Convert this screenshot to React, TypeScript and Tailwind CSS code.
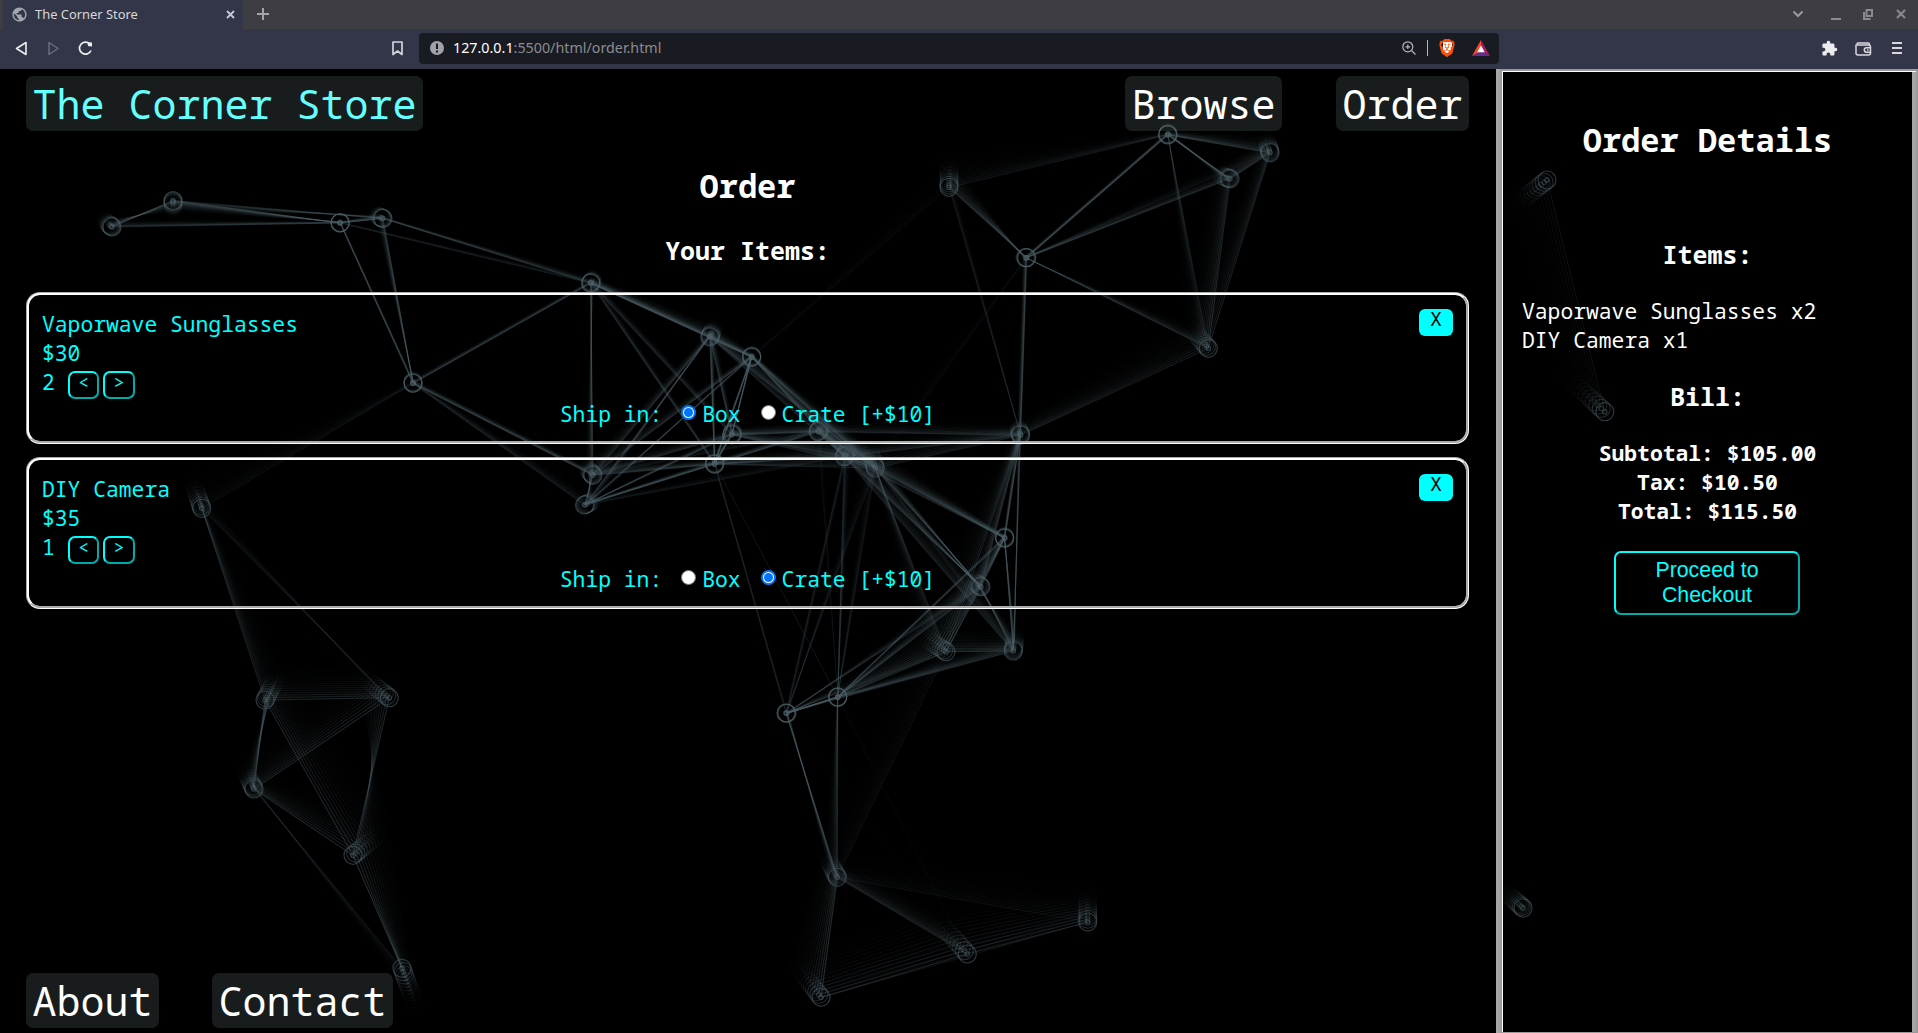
import React from "react";
import { SiBrave } from "react-icons/si";
import { MdPublic, MdExtension } from "react-icons/md";

type Node = [number, number, number, number];

/* x, y of each particle in the window, then the offset to the tail of its trail */
const nodes: Record<string, Node> = {
  A: [112, 227, -10, -9], B: [173, 200.5, 0, 14], C: [340, 223, 1, -2], D: [383, 218.5, -10, -5],
  E: [413, 383.5, 0, -6], F: [590.6, 283.3, 4, -7], G: [709.8, 337, 6, -14], H: [751.7, 357.3, 0, -5],
  I: [731.8, 435, 2, -9], J: [714.6, 464.3, 0, -6], K: [818, 431.7, 8, -12], L: [844.3, 456.7, 10, -18],
  M: [875.3, 468, -10, -30], N: [1020.6, 435.2, -4, -14], O: [1004.7, 538.3, -1, -5],
  P: [981, 586.7, -14, -11], Q: [946, 651.7, -38, -26], R: [1013.3, 651, 3, -24],
  S: [837.7, 697.3, 0, -2], T: [786, 713, 4, 1], U: [837.3, 877.3, -16, -30], V: [821, 997.3, -36, -46],
  W: [967.3, 954, -48, -56], X: [1087.7, 922, 0, -46], Y: [592.9, 475.3, -10, -12], Z: [584.5, 505, 16, -8],
  a: [201.7, 508.3, -13, -40], b: [265, 700, 20, -38], c: [389.3, 697.7, -42, -34],
  d: [254, 789, -13, -26], e: [353, 855.3, 44, -36], f: [402, 968.3, 20, 56], g: [949, 187.3, 0, -36],
  h: [1167.7, 135, 1, -5], i: [1270, 152.7, -5, -20], j: [1230, 178.7, -18, -6],
  k: [1026.7, 257.7, -5, 0], l: [1208.3, 348.3, -28, -32],
  m: [1547, 180, -48, 38], n: [1604.8, 411.7, -58, -54], o: [1523, 908, -26, -24],
};

/* pairs of particles with the strength of the thread between them, in tenths */
const links =
  "AB6 AC4 BC6 BD4 CD6 DF4 CE4 DE5 CF2 EF4 EY5 EZ3 Ea2 ab4 ac2 bc5 bd6 cd5 be5 ce5 de5 df2 ef6 " +
  "FG7 FH5 FY5 FJ3 FI3 GH6 GY4 GZ4 GJ5 GI4 GL4 GM5 HY4 HZ3 HI5 HJ5 HL6 HM5 Hg1 IK6 IL4 IM4 IZ4 IY4 IJ6 " +
  "JL5 JK4 JM4 JY5 JZ5 YK2 ZK2 KL7 KM7 KN4 YZ6 ZL2 LM7 LN4 MN4 MO6 LO4 LP5 MP5 MQ4 LR4 MR2 OP6 OR5 ON5 NP5 " +
  "NQ4 NR4 Nk5 Ng2 Nl4 kg6 kh5 kj4 kl4 gh3 hi6 hj6 hl3 ij6 il4 jl5 kM1 ki2 LS3 LT2 MS2 MT2 JT2 JS1 KS1 " +
  "PQ6 PR5 PS4 PT3 QR6 QS5 QT4 RS4 RT3 OS3 OQ4 ST6 SU4 TU5 QU2 UV6 UW5 UX2 VW5 WX5 TW.3 SW.5 VX2 mn2";

const STEPS = 14;

function Particles() {
  const at = (id: string, k: number) => {
    const [x, y, dx, dy] = nodes[id];
    return [x + (dx * k * 0.85) / STEPS, y + (dy * k * 0.85) / STEPS - 69];
  };
  const steps = Array.from({ length: STEPS }, (_, k) => STEPS - 1 - k);
  return (
    <svg className="pointer-events-none absolute inset-0" width="1918" height="964" fill="none" stroke="#52656c">
      {steps.map((k) => {
        const threadFade = Math.pow(0.82, k);
        const ringFade = Math.pow(0.72, k);
        return (
          <g key={k} strokeWidth={1.2}>
            {links.split(" ").map((l) => {
              const [x1, y1] = at(l[0], k);
              const [x2, y2] = at(l[1], k);
              return <line key={l} x1={x1} y1={y1} x2={x2} y2={y2} strokeOpacity={0.07 * Number(l.slice(2)) * threadFade} />;
            })}
            {Object.keys(nodes).map((id) => {
              const [cx, cy] = at(id, k);
              return (
                <g key={id} strokeOpacity={0.55 * ringFade}>
                  <circle cx={cx} cy={cy} r={9} />
                  <circle cx={cx} cy={cy} r={2.2} />
                </g>
              );
            })}
          </g>
        );
      })}
    </svg>
  );
}

const mono = "font-['Noto_Sans_Mono','DejaVu_Sans_Mono',monospace]";

function BrowserBar() {
  return (
    <header className="shrink-0 font-['Noto_Sans',sans-serif]">
      <div className="flex h-[29px] items-center bg-[#3e3d44] pb-px pl-[3px]">
        <div className="-mb-px flex h-[29px] w-[240px] items-center bg-[#333648] pb-px pl-2 text-[#d6d6d8]">
          <MdPublic className="size-[17px] text-[#a3a6b0]" />
          <span className="ml-[7px] mt-px text-[12.900px]">The Corner Store</span>
          <svg className="ml-auto mr-[8px]" width="9" height="9" viewBox="0 0 9 9" stroke="#c9c9cf" strokeWidth="1.8">
            <path d="M1 1l7 7M8 1L1 8" />
          </svg>
        </div>
        <svg className="ml-[14px]" width="12" height="12" viewBox="0 0 12 12" stroke="#a3a3a8" strokeWidth="2">
          <path d="M6 0v12M0 6h12" />
        </svg>
        <svg className="ml-auto mr-[27px]" width="12" height="8" viewBox="0 0 12 8" fill="none" stroke="#9a9a9e" strokeWidth="2">
          <path d="M1.500 1.500L6 6l4.500-4.500" />
        </svg>
        <div className="mr-[22px] mt-[9px] h-[2px] w-[10px] bg-[#8b8b8f]" />
        <svg className="mr-[23px]" width="10" height="11" viewBox="0 0 10 11" fill="none" stroke="#8b8b8f" strokeWidth="2">
          <path d="M3.500 1H9v6H3.500zM1 3v7h6.500" />
        </svg>
        <svg className="mr-[12px]" width="10" height="10" viewBox="0 0 10 10" stroke="#8b8b8f" strokeWidth="2">
          <path d="M1 1l8 8M9 1L1 9" />
        </svg>
      </div>
      <div className="flex h-[40px] items-center bg-[#333648] pb-[2px] pl-[15px]">
        <svg width="12" height="15" viewBox="0 0 12 15" fill="none" stroke="#eeeef0" strokeWidth="1.600" strokeLinejoin="round">
          <path d="M11 1.500v12L1.500 7.500z" />
        </svg>
        <svg className="ml-[21px]" width="12" height="15" viewBox="0 0 12 15" fill="none" stroke="#6b6d7c" strokeWidth="1.500" strokeLinejoin="round">
          <path d="M1 1.500v12L10 7.500z" />
        </svg>
        <svg className="ml-[18px]" width="15" height="15" viewBox="0 0 15 15" fill="none" stroke="#eeeef0" strokeWidth="1.700">
          <path d="M11.800 3A6 6 0 1 0 13 9.500" />
          <path d="M9.500 1.500h4.500v4.500z" fill="#eeeef0" stroke="none" />
          <circle cx="11.700" cy="3.600" r="2" fill="#eeeef0" stroke="none" />
        </svg>
        <svg className="ml-[299px]" width="11" height="15" viewBox="0 0 11 15" fill="none" stroke="#d4d4da" strokeWidth="1.700" strokeLinejoin="round">
          <path d="M1 1h9v12.500l-4.500-3.500L1 13.500z" />
        </svg>
        <div className="ml-[16px] mt-px flex h-[31px] w-[1080px] items-center rounded-[4px] bg-[#191b22] pb-px pl-[11px] pr-[9px]">
          <svg width="14" height="14" viewBox="0 0 14 14">
            <circle cx="7" cy="7" r="7" fill="#a0a2ab" />
            <path d="M6 2.500h2v5.500H6zM6 9.500h2v2H6z" fill="#191b22" />
          </svg>
          <span className="ml-[9px] text-[14.300px] text-white">
            127.0.0.1<span className="text-[#8b8b8e]">:5500/html/order.html</span>
          </span>
          <svg className="ml-auto" width="14" height="14" viewBox="0 0 14 14" fill="none" stroke="#b5b6bb" strokeWidth="1.200">
            <circle cx="5.800" cy="5.800" r="5" />
            <path d="M9.500 9.500l4 4M3.500 5.800h4.600M5.800 3.500v4.600" />
          </svg>
          <div className="ml-[11px] h-[16px] w-px bg-[#b5b6bb]" />
          <div className="relative ml-[11px] h-[18px] w-[17px]">
            <div className="absolute left-[4px] top-[3px] h-[11px] w-[9px] bg-white" />
            <SiBrave className="absolute -left-px top-0 size-[18px] text-[#f9510c]" />
          </div>
          <svg className="ml-[16px]" width="18" height="16" viewBox="0 0 18 16">
            <path d="M9 0L0 16l9-5z" fill="#ff4724" />
            <path d="M9 0l9 16-9-5z" fill="#9e1f63" />
            <path d="M0 16h18l-9-5z" fill="#662d91" />
            <path d="M9 5.500l3.800 6.700H5.200z" fill="#fff" />
          </svg>
        </div>
        <MdExtension className="ml-auto size-[17px] text-[#ececef]" />
        <svg className="ml-[17px] mt-px" width="17" height="14" viewBox="0 0 17 14" fill="none" stroke="#d8d8dd" strokeWidth="1.500">
          <path d="M1 2.500v8.500a2 2 0 0 0 2 2h10.500a2 2 0 0 0 2-2V5a2 2 0 0 0-2-2H2.500a1.300 1.300 0 0 1 0-2h10.500a1.500 1.500 0 0 1 1.500 1.500M16 5.800h-4.500a2.200 2.200 0 0 0 0 4.400H16M12 8h1.500" />
        </svg>
        <div className="ml-[20px] mr-[16px] flex flex-col gap-[3px]">
          <div className="h-[2px] w-[10px] bg-[#d8d8dd]" />
          <div className="h-[2px] w-[10px] bg-[#d8d8dd]" />
          <div className="h-[2px] w-[10px] bg-[#d8d8dd]" />
        </div>
      </div>
    </header>
  );
}

function NavLink({ children, className = "text-white" }: { children: string; className?: string }) {
  return (
    <a className={`flex h-[55px] items-center rounded-[7px] bg-[rgba(172,200,200,0.14)] px-[6.500px] text-[40px] leading-[55px] ${className}`}>
      {children}
    </a>
  );
}

function Radio({ checked }: { checked: boolean }) {
  return checked ? (
    <span className="-mt-[2px] flex size-[15px] items-center justify-center rounded-full border-2 border-[#0075ff] bg-white">
      <span className="size-[9px] rounded-full bg-[#0075ff]" />
    </span>
  ) : (
    <span className="-mt-[2px] size-[15px] rounded-full border border-[#767676] bg-white" />
  );
}

const stepButton =
  "mt-[4px] flex h-[28px] items-center justify-center rounded-[7px] border-2 border-[#00ffff] [border-style:outset] pb-[4px] text-[17.800px] leading-none";

function ItemCard({ name, price, count, crate }: { name: string; price: string; count: number; crate: boolean }) {
  return (
    <article className="flex h-[152px] flex-col rounded-[14px] border-[3px] border-white px-[13px] pt-[13.500px] text-[21.330px] leading-[29px] text-[#00ffff] [border-style:groove]">
      <div className="flex justify-between">
        <div>
          <p>{name}</p>
          <p>{price}</p>
          <div className="flex">
            <span className="w-[26px]">{count}</span>
            <button className={`w-[31px] ${stepButton}`}>&lt;</button>
            <button className={`ml-[4px] w-[32px] ${stepButton}`}>&gt;</button>
          </div>
        </div>
        <button className="flex h-[27px] w-[34px] items-center justify-center rounded-[6px] bg-[#00ffff] pb-[6px] text-[20px] leading-none text-black">
          X
        </button>
      </div>
      <div className="flex items-center justify-center">
        <span className="mr-[19px]">Ship in:</span>
        <Radio checked={!crate} />
        <span className="ml-[6px] mr-[20px]">Box</span>
        <Radio checked={crate} />
        <span className="ml-[6px]">Crate [+$10]</span>
      </div>
    </article>
  );
}

export default function App() {
  return (
    <div className="flex h-[1033px] w-[1918px] flex-col overflow-hidden bg-black">
      <BrowserBar />
      <div className={`relative flex min-h-0 flex-1 text-white ${mono}`}>
        <Particles />
        <main className="relative flex w-[1496px] flex-col pb-[5px] pl-[26px] pr-[27px] pt-[7px]">
          <nav className="flex">
            <NavLink className="text-[#66ffff]">The Corner Store</NavLink>
            <div className="ml-auto flex gap-[54px]">
              <NavLink>Browse</NavLink>
              <NavLink>Order</NavLink>
            </div>
          </nav>
          <h1 className="mt-[33px] text-center text-[32px] font-bold leading-[44px]">Order</h1>
          <h2 className="mt-[25px] text-center text-[24.960px] font-bold leading-[34px]">Your Items:</h2>
          <div className="mt-[25px] flex flex-col gap-[13px]">
            <ItemCard name="Vaporwave Sunglasses" price="$30" count={2} crate={false} />
            <ItemCard name="DIY Camera" price="$35" count={1} crate />
          </div>
          <footer className="mt-auto flex gap-[53px]">
            <NavLink>About</NavLink>
            <NavLink>Contact</NavLink>
          </footer>
        </main>
        <div className="relative w-[4px] bg-[#a5a5a5]" />
        <div className="relative flex flex-1 border-b border-l-2 border-r-2 border-t-2 border-[#9a9a9a]">
          <aside className="flex flex-1 flex-col items-center border-l border-t border-white">
            <h2 className="mt-[46px] text-[32px] font-bold leading-[44px]">Order Details</h2>
            <h3 className="mt-[75px] text-[24.960px] font-bold leading-[34px]">Items:</h3>
            <ul className="mt-[25px] w-full pl-[19px] text-[21.330px] leading-[29px]">
              <li>Vaporwave Sunglasses x2</li>
              <li>DIY Camera x1</li>
            </ul>
            <h3 className="mt-[25px] text-[24.960px] font-bold leading-[34px]">Bill:</h3>
            <div className="mt-[25px] text-center text-[21.330px] font-bold leading-[29px]">
              <p>Subtotal: $105.00</p>
              <p>Tax: $10.50</p>
              <p>Total: $115.50</p>
            </div>
            <button className="mr-px mt-[26px] h-[64px] w-[186px] rounded-[7px] border-2 border-[#00ffff] px-8 pb-px font-['Liberation_Sans',sans-serif] text-[21.330px] leading-[25px] text-[#00ffff] [border-style:outset]">
              Proceed to Checkout
            </button>
          </aside>
          <div className="w-[4px] border-t border-white bg-[#a5a5a5]" />
        </div>
      </div>
    </div>
  );
}
